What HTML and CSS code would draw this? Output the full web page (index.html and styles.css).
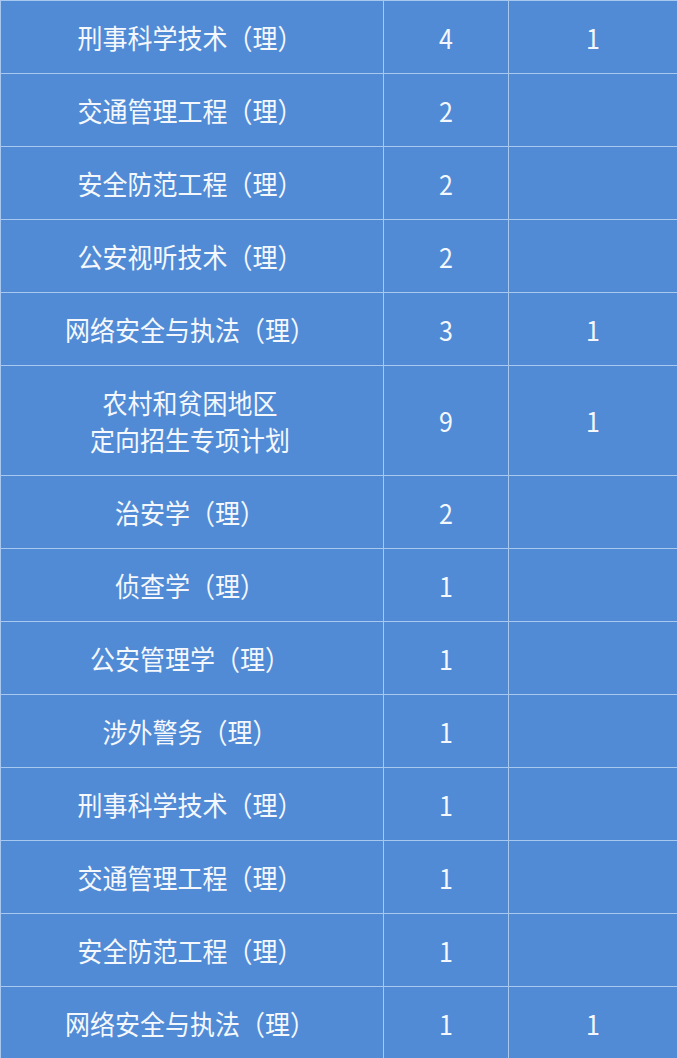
FILE: index.html
```html
<!DOCTYPE html>
<html lang="zh-CN">
<head>
<meta charset="utf-8">
<title>招生计划</title>
<link rel="stylesheet" href="styles.css">
</head>
<body>
<table class="plan">
  <colgroup>
    <col class="c-name">
    <col class="c-num">
    <col class="c-extra">
  </colgroup>
  <tbody>
    <tr><td class="name"><span class="t">刑事科学技术（理）</span></td><td><span class="t">4</span></td><td><span class="t">1</span></td></tr>
    <tr><td class="name"><span class="t">交通管理工程（理）</span></td><td><span class="t">2</span></td><td></td></tr>
    <tr><td class="name"><span class="t">安全防范工程（理）</span></td><td><span class="t">2</span></td><td></td></tr>
    <tr><td class="name"><span class="t">公安视听技术（理）</span></td><td><span class="t">2</span></td><td></td></tr>
    <tr><td class="name"><span class="t">网络安全与执法（理）</span></td><td><span class="t">3</span></td><td><span class="t">1</span></td></tr>
    <tr class="tall"><td class="name"><span class="t">农村和贫困地区</span><br><span class="t">定向招生专项计划</span></td><td><span class="t">9</span></td><td><span class="t">1</span></td></tr>
    <tr><td class="name"><span class="t">治安学（理）</span></td><td><span class="t">2</span></td><td></td></tr>
    <tr><td class="name"><span class="t">侦查学（理）</span></td><td><span class="t">1</span></td><td></td></tr>
    <tr><td class="name"><span class="t">公安管理学（理）</span></td><td><span class="t">1</span></td><td></td></tr>
    <tr><td class="name"><span class="t">涉外警务（理）</span></td><td><span class="t">1</span></td><td></td></tr>
    <tr><td class="name"><span class="t">刑事科学技术（理）</span></td><td><span class="t">1</span></td><td></td></tr>
    <tr><td class="name"><span class="t">交通管理工程（理）</span></td><td><span class="t">1</span></td><td></td></tr>
    <tr><td class="name"><span class="t">安全防范工程（理）</span></td><td><span class="t">1</span></td><td></td></tr>
    <tr><td class="name"><span class="t">网络安全与执法（理）</span></td><td><span class="t">1</span></td><td><span class="t">1</span></td></tr>
  </tbody>
</table>
</body>
</html>
```

FILE: styles.css
```css
html, body {
  margin: 0;
  padding: 0;
  background: #518bd6;
}

.plan {
  width: 677px;
  border-collapse: collapse;
  table-layout: fixed;
  background: #518bd6;
  font-family: "Noto Sans CJK SC", "Noto Sans", sans-serif;
  font-size: 25px;
  color: #f4f8fd;
  text-spacing-trim: space-all;
}

.c-name { width: 383px; }
.c-num { width: 125px; }
.c-extra { width: 169px; }

.plan td {
  height: 72px;
  padding: 0;
  border: 1px solid #a9c8ef;
  text-align: center;
  vertical-align: middle;
  line-height: 32px;
}

.plan tr.tall td {
  height: 109px;
  line-height: 37px;
}

.plan td.name {
  padding-right: 4px;
}

.t {
  display: inline-block;
  transform: scaleY(1.1);
}
```
